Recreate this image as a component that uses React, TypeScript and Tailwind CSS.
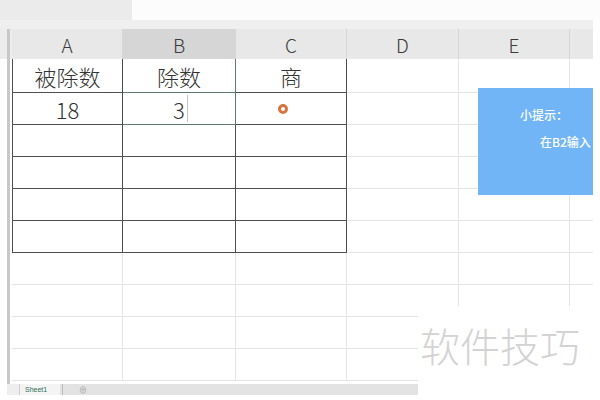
import React from "react";

const colW = ["w-[111px]", "w-[113px]", "w-[111px]", "w-[112px]", "w-[111px]", "w-[23px]"];
const headers = ["A", "B", "C", "D", "E", ""];

function borderFor(r: number, c: number): string {
  const table = r <= 5 && c <= 2;
  if (table) {
    const green = r <= 1 && c === 1;
    const color = green ? "border-[#5c7a70]" : "border-[#4f4f4f]";
    return `border-r border-b ${color}${c === 0 ? " border-l" : ""}`;
  }
  if (c === 5) return "border-b border-[#e4e4e4]";
  return "border-r border-b border-[#e4e4e4]";
}

function Stub({ header }: { header?: boolean }) {
  return (
    <div className={`w-[12px] h-full shrink-0 flex ${header ? "bg-[#ececec]" : "bg-white"}`}>
      <div className="ml-[7px] w-[3px] h-full bg-[#c8c8c8]" />
    </div>
  );
}

function Ring() {
  return <div className="ml-[42px] w-[10px] h-[10px] rounded-full border-[3px] border-[#d8743e] bg-white" />;
}

function CellContent({ r, c }: { r: number; c: number }) {
  if (r === 0) {
    const t = ["被除数", "除数", "商"][c];
    return t ? <span>{t}</span> : null;
  }
  if (r === 1) {
    if (c === 0) return <span>18</span>;
    if (c === 1)
      return (
        <span className="relative">
          3
          <span className="absolute left-[calc(100%+2px)] top-[-3px] w-px h-[27px] bg-[#c4c4c4]" />
        </span>
      );
    if (c === 2) return <Ring />;
  }
  return null;
}

export default function App() {
  const rowHeights = ["h-[34px]", "h-[32px]", "h-[32px]", "h-[32px]", "h-[32px]", "h-[32px]", "h-[32px]", "h-[32px]", "h-[32px]", "h-[32px]"];
  return (
    <div className="relative w-[600px] h-[400px] bg-white overflow-hidden font-['Noto_Sans_CJK_SC','Liberation_Sans',sans-serif]">
      {/* top tab strip */}
      <div className="flex h-[20px] w-[600px]">
        <div className="w-[132px] h-full bg-[#ebebeb]" />
        <div className="flex-1 h-full bg-[#fcfcfc]" />
      </div>
      <div className="h-[9px] w-[593px] bg-[#efefef]" />

      {/* column headers */}
      <div className="flex h-[30px] w-[593px] bg-[#e8e8e8]">
        <Stub header />
        {headers.map((h, c) => (
          <div
            key={c}
            className={`${colW[c]} h-full shrink-0 flex items-center justify-center text-[19px] font-light leading-none text-[#3a3a3a] ${
              c === 1 ? "bg-[#d6d6d6]" : ""
            } ${c < 5 ? "border-r border-[#d6d6d6]" : ""}`}
          >
            {h}
          </div>
        ))}
      </div>

      {/* body rows */}
      {rowHeights.map((rh, r) => (
        <div key={r} className={`flex ${rh} w-[593px]`}>
          <Stub />
          {colW.map((w, c) => (
            <div
              key={c}
              className={`${w} h-full shrink-0 flex items-center ${
                r === 1 && c === 2 ? "justify-start" : "justify-center"
              } text-[22px] font-light leading-none text-[#333333] ${borderFor(r, c)}`}
            >
              <CellContent r={r} c={c} />
            </div>
          ))}
        </div>
      ))}

      {/* spacer to tab bar */}
      <div className="flex h-[3px] w-[593px]">
        <Stub />
      </div>

      {/* sheet tab bar */}
      <div className="flex h-[11px] w-[411px] ml-[7px] bg-[#e3e3e3] items-stretch">
        <div className="w-[13px] bg-[#eeeeee] border-r border-[#cfcfcf]" />
        <div className="w-[40px] bg-[#f4f4f4] flex items-center pl-[5px] text-[7px] leading-none text-[#2d6e55] font-['Liberation_Sans',sans-serif]">
          Sheet1
        </div>
        <div className="w-px bg-[#bdbdbd] ml-[2px]" />
        <div className="flex items-center pl-[16px] text-[8px] leading-none text-[#a0a0a0]">⊕</div>
      </div>

      {/* floating text box */}
      <div className="absolute left-[478px] top-[88px] w-[115px] h-[107px] bg-[#72b5f6] overflow-hidden flex flex-col whitespace-nowrap text-white text-[12px] leading-[16px] font-medium">
        <div className="pl-[42px] pt-[19px]">小提示：</div>
        <div className="pl-[62px] mt-[11px]">在B2输入</div>
      </div>

      {/* watermark */}
      <div className="absolute left-[418px] top-[306px] w-[182px] h-[94px] bg-white pl-[2px] pt-[19px] text-[40px] font-light leading-none text-[#d3d3d3] whitespace-nowrap">
        软件技巧
      </div>
    </div>
  );
}
